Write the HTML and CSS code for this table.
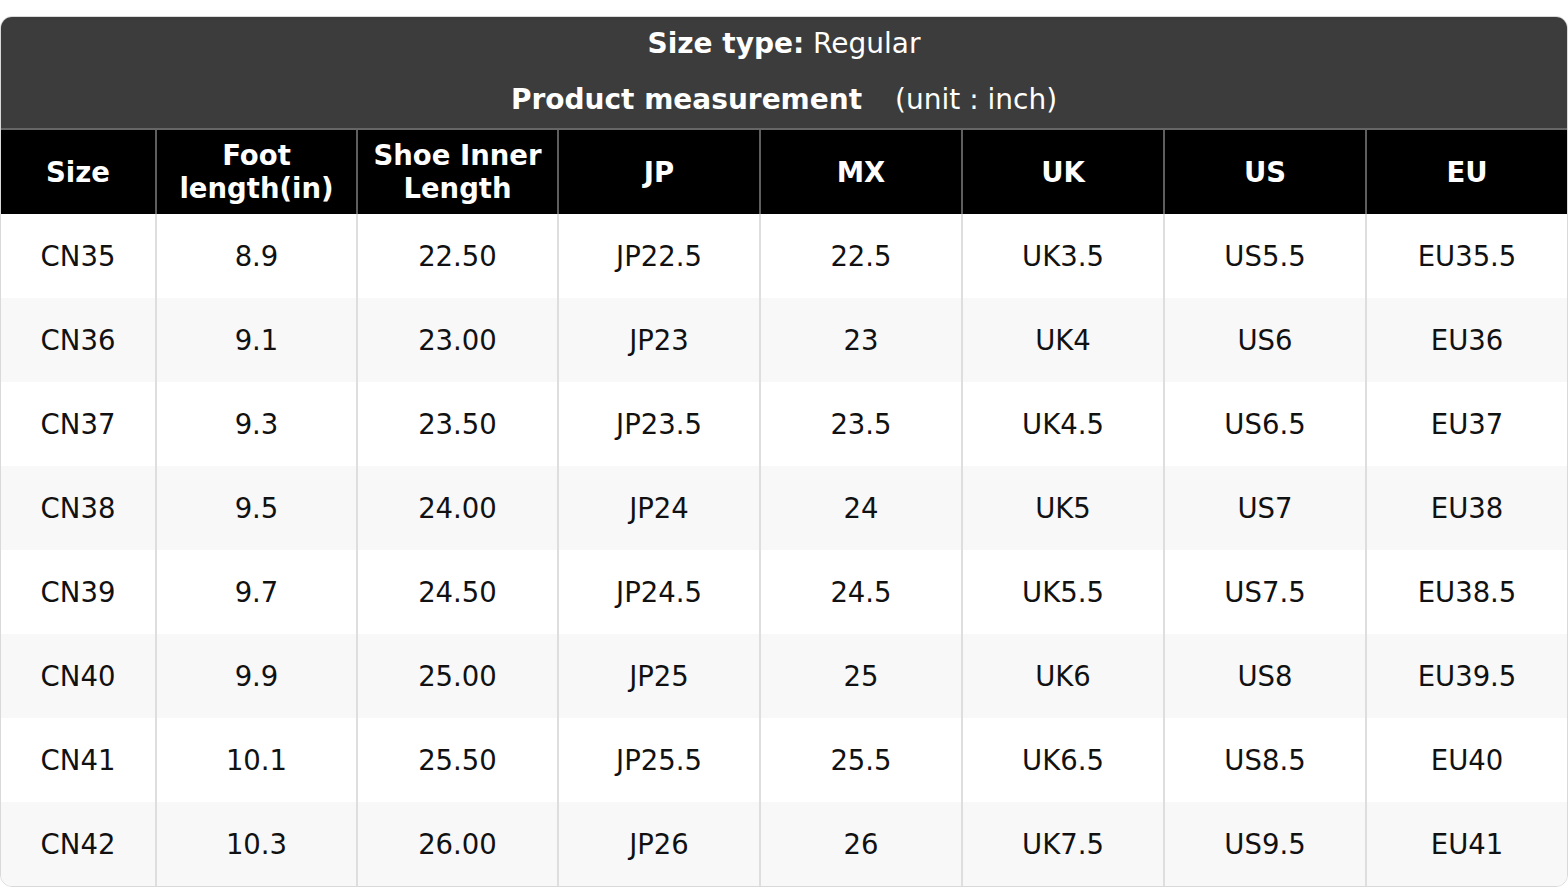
FILE: index.html
```html
<!DOCTYPE html>
<html>
<head>
<meta charset="utf-8">
<link rel="stylesheet" href="styles.css">
</head>
<body>
<div class="card">
  <div class="hdr">
    <div class="line"><b>Size type:</b> Regular</div>
    <div class="line"><b>Product measurement</b><span class="unit">(unit : inch)</span></div>
  </div>
  <table class="sizes">
    <colgroup><col class="c1"><col class="cn"><col class="cn"><col class="cw"><col class="cw"><col class="cw"><col class="cw"><col></colgroup>
    <thead>
      <tr><th>Size</th><th>Foot<br>length(in)</th><th>Shoe Inner<br>Length</th><th>JP</th><th>MX</th><th>UK</th><th>US</th><th>EU</th></tr>
    </thead>
    <tbody>
      <tr><td>CN35</td><td>8.9</td><td>22.50</td><td>JP22.5</td><td>22.5</td><td>UK3.5</td><td>US5.5</td><td>EU35.5</td></tr>
      <tr><td>CN36</td><td>9.1</td><td>23.00</td><td>JP23</td><td>23</td><td>UK4</td><td>US6</td><td>EU36</td></tr>
      <tr><td>CN37</td><td>9.3</td><td>23.50</td><td>JP23.5</td><td>23.5</td><td>UK4.5</td><td>US6.5</td><td>EU37</td></tr>
      <tr><td>CN38</td><td>9.5</td><td>24.00</td><td>JP24</td><td>24</td><td>UK5</td><td>US7</td><td>EU38</td></tr>
      <tr><td>CN39</td><td>9.7</td><td>24.50</td><td>JP24.5</td><td>24.5</td><td>UK5.5</td><td>US7.5</td><td>EU38.5</td></tr>
      <tr><td>CN40</td><td>9.9</td><td>25.00</td><td>JP25</td><td>25</td><td>UK6</td><td>US8</td><td>EU39.5</td></tr>
      <tr><td>CN41</td><td>10.1</td><td>25.50</td><td>JP25.5</td><td>25.5</td><td>UK6.5</td><td>US8.5</td><td>EU40</td></tr>
      <tr><td>CN42</td><td>10.3</td><td>26.00</td><td>JP26</td><td>26</td><td>UK7.5</td><td>US9.5</td><td>EU41</td></tr>
    </tbody>
  </table>
</div>
</body>
</html>
```
FILE: styles.css
```css
* { box-sizing: border-box; }
html, body { margin: 0; padding: 0; background: #fff; }
body {
  padding-top: 16px;
  font-family: "DejaVu Sans", "Liberation Sans", sans-serif;
  color: #111;
}
.card {
  border: 1px solid #d9d9d9;
  border-radius: 12px;
  overflow: hidden;
  background: #fff;
}
.hdr {
  background: #3c3c3c;
  color: #fff;
  display: flex;
  flex-direction: column;
  align-items: center;
  gap: 22px;
  padding: 10px 0 11px;
  font-size: 28px;
  border-bottom: 2px solid #666;
}
.hdr .line { line-height: 34px; white-space: pre; }
.hdr .unit { margin-left: 33px; }
.sizes {
  width: 100%;
  table-layout: fixed;
  border-collapse: separate;
  border-spacing: 0;
  font-size: 27.5px;
}
.sizes col.c1 { width: 154px; }
.sizes col.cn { width: 201px; }
.sizes col.cw { width: 202px; }
.sizes th {
  background: #000;
  color: #fff;
  font-weight: bold;
  height: 84px;
  line-height: 33px;
  padding: 0;
  text-align: center;
  vertical-align: middle;
}
.sizes td {
  height: 84px;
  padding: 0;
  text-align: center;
  vertical-align: middle;
  color: #111;
}
.sizes th + th { border-left: 2px solid #5e5e5e; }
.sizes td + td { border-left: 2px solid #dedede; }
.sizes tbody tr:nth-child(even) td { background: #f8f8f8; }
```
